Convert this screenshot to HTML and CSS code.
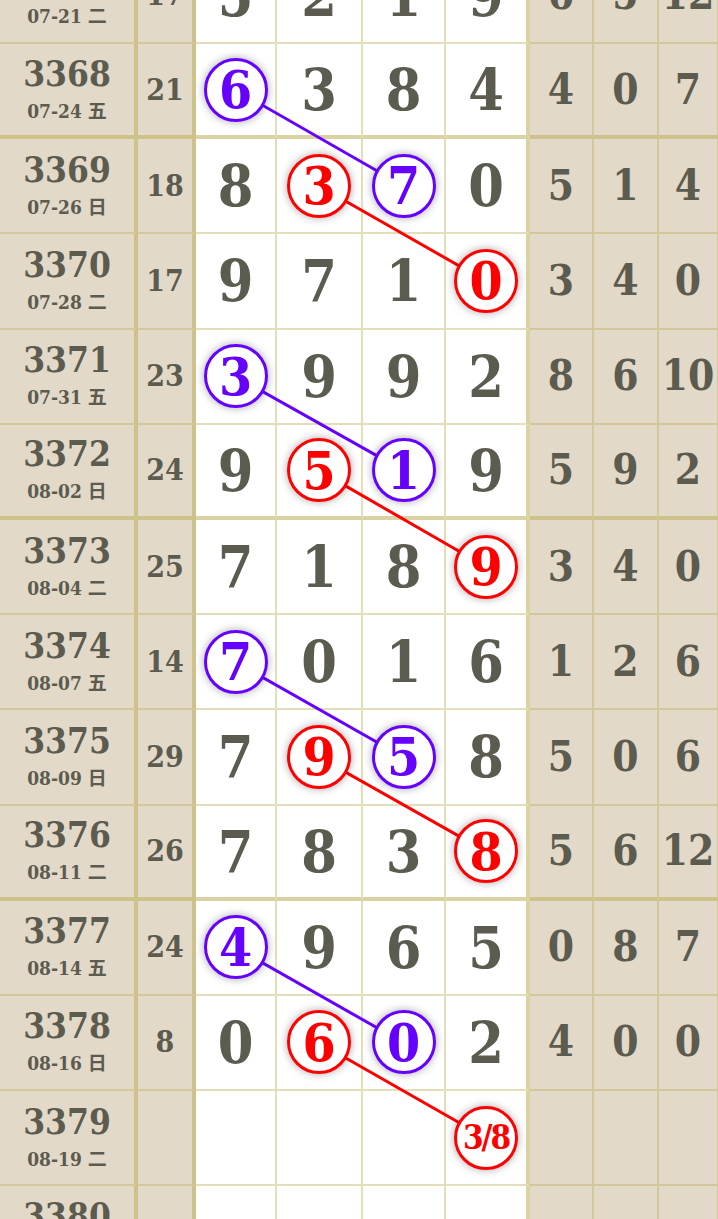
FILE: index.html
```html
<!DOCTYPE html>
<html>
<head>
<meta charset="utf-8">
<title>走势图</title>
<link rel="stylesheet" href="styles.css">
</head>
<body>

<div class="chart">

  <!-- connecting lines, drawn under the balls -->
  <svg class="links" width="719" height="1400">
    <g stroke="#6600ff" stroke-width="3">
      <line x1="235.5" y1="140.8" x2="403.5" y2="237.0"/>
      <line x1="235.5" y1="427.4" x2="403.5" y2="521.6"/>
      <line x1="235.5" y1="713.0" x2="403.5" y2="808.2"/>
      <line x1="235.5" y1="998.6" x2="403.5" y2="1093.8"/>
    </g>
    <g stroke="#ff0000" stroke-width="3">
      <line x1="319" y1="237.0" x2="486" y2="332.2"/>
      <line x1="319" y1="521.6" x2="486" y2="617.8"/>
      <line x1="319" y1="808.2" x2="486" y2="902.4"/>
      <line x1="319" y1="1093.8" x2="486" y2="1189.0"/>
    </g>
  </svg>

  <div class="row">
    <div class="issue"><span class="no">3367</span><span class="date">07-21 二</span></div>
    <div class="sum">17</div>
    <div class="num">5</div><div class="num">2</div><div class="num">1</div><div class="num n4">9</div>
    <div class="stat">6</div><div class="stat">5</div><div class="stat">12</div>
  </div>

  <div class="row sep">
    <div class="issue"><span class="no">3368</span><span class="date">07-24 五</span></div>
    <div class="sum">21</div>
    <div class="num"><span class="ball blue">6</span></div><div class="num">3</div><div class="num">8</div><div class="num n4">4</div>
    <div class="stat">4</div><div class="stat">0</div><div class="stat">7</div>
  </div>

  <div class="row">
    <div class="issue"><span class="no">3369</span><span class="date">07-26 日</span></div>
    <div class="sum">18</div>
    <div class="num">8</div><div class="num"><span class="ball red">3</span></div><div class="num"><span class="ball blue">7</span></div><div class="num n4">0</div>
    <div class="stat">5</div><div class="stat">1</div><div class="stat">4</div>
  </div>

  <div class="row">
    <div class="issue"><span class="no">3370</span><span class="date">07-28 二</span></div>
    <div class="sum">17</div>
    <div class="num">9</div><div class="num">7</div><div class="num">1</div><div class="num n4"><span class="ball red">0</span></div>
    <div class="stat">3</div><div class="stat">4</div><div class="stat">0</div>
  </div>

  <div class="row">
    <div class="issue"><span class="no">3371</span><span class="date">07-31 五</span></div>
    <div class="sum">23</div>
    <div class="num"><span class="ball blue">3</span></div><div class="num">9</div><div class="num">9</div><div class="num n4">2</div>
    <div class="stat">8</div><div class="stat">6</div><div class="stat">10</div>
  </div>

  <div class="row sep">
    <div class="issue"><span class="no">3372</span><span class="date">08-02 日</span></div>
    <div class="sum">24</div>
    <div class="num">9</div><div class="num"><span class="ball red">5</span></div><div class="num"><span class="ball blue">1</span></div><div class="num n4">9</div>
    <div class="stat">5</div><div class="stat">9</div><div class="stat">2</div>
  </div>

  <div class="row">
    <div class="issue"><span class="no">3373</span><span class="date">08-04 二</span></div>
    <div class="sum">25</div>
    <div class="num">7</div><div class="num">1</div><div class="num">8</div><div class="num n4"><span class="ball red">9</span></div>
    <div class="stat">3</div><div class="stat">4</div><div class="stat">0</div>
  </div>

  <div class="row">
    <div class="issue"><span class="no">3374</span><span class="date">08-07 五</span></div>
    <div class="sum">14</div>
    <div class="num"><span class="ball blue">7</span></div><div class="num">0</div><div class="num">1</div><div class="num n4">6</div>
    <div class="stat">1</div><div class="stat">2</div><div class="stat">6</div>
  </div>

  <div class="row">
    <div class="issue"><span class="no">3375</span><span class="date">08-09 日</span></div>
    <div class="sum">29</div>
    <div class="num">7</div><div class="num"><span class="ball red">9</span></div><div class="num"><span class="ball blue">5</span></div><div class="num n4">8</div>
    <div class="stat">5</div><div class="stat">0</div><div class="stat">6</div>
  </div>

  <div class="row sep">
    <div class="issue"><span class="no">3376</span><span class="date">08-11 二</span></div>
    <div class="sum">26</div>
    <div class="num">7</div><div class="num">8</div><div class="num">3</div><div class="num n4"><span class="ball red">8</span></div>
    <div class="stat">5</div><div class="stat">6</div><div class="stat">12</div>
  </div>

  <div class="row">
    <div class="issue"><span class="no">3377</span><span class="date">08-14 五</span></div>
    <div class="sum">24</div>
    <div class="num"><span class="ball blue">4</span></div><div class="num">9</div><div class="num">6</div><div class="num n4">5</div>
    <div class="stat">0</div><div class="stat">8</div><div class="stat">7</div>
  </div>

  <div class="row">
    <div class="issue"><span class="no">3378</span><span class="date">08-16 日</span></div>
    <div class="sum">8</div>
    <div class="num">0</div><div class="num"><span class="ball red">6</span></div><div class="num"><span class="ball blue">0</span></div><div class="num n4">2</div>
    <div class="stat">4</div><div class="stat">0</div><div class="stat">0</div>
  </div>

  <div class="row">
    <div class="issue"><span class="no">3379</span><span class="date">08-19 二</span></div>
    <div class="sum"></div>
    <div class="num"></div><div class="num"></div><div class="num"></div><div class="num n4"><span class="ball red guess">3/8</span></div>
    <div class="stat"></div><div class="stat"></div><div class="stat"></div>
  </div>

  <div class="row sep">
    <div class="issue"><span class="no">3380</span><span class="date">08-21 四</span></div>
    <div class="sum"></div>
    <div class="num"></div><div class="num"></div><div class="num"></div><div class="num n4"></div>
    <div class="stat"></div><div class="stat"></div><div class="stat"></div>
  </div>

</div>

</body>
</html>
```

FILE: styles.css
```css
body {
    margin: 0;
    background: #fff;
    overflow: hidden;
    font-family: "DejaVu Serif", "Liberation Serif", "Noto Sans CJK SC", serif;
    font-stretch: condensed;
    font-weight: bold;
    color: #5c5b4f;
}

.chart {
    position: relative;
    display: grid;
    grid-template-columns: 138px 58px 81px 86px 83px 84px 64px 65px 60px;
    grid-auto-rows: 95.2px;
    width: 719px;
    margin-top: -51.2px;
}

.row {
    display: contents;
}

.row > div {
    display: flex;
    align-items: center;
    justify-content: center;
    box-sizing: border-box;
    border-right: 2px solid rgba(190, 175, 90, 0.42);
    border-bottom: 2px solid rgba(190, 175, 90, 0.42);
    line-height: 1;
}

.row.sep > div {
    border-bottom: 4px solid rgba(190, 175, 90, 0.55);
}

.row > .issue,
.row > .sum,
.row > .n4 {
    border-right: 4px solid rgba(190, 175, 90, 0.55);
}

.issue, .sum, .stat {
    background: #e2d9c8;
}

.issue {
    flex-direction: column;
    padding-bottom: 2px;
}

.issue .no {
    font-size: 35px;
    line-height: 38px;
}

.issue .date {
    margin-top: 6px;
    font-size: 19px;
    line-height: 24px;
}

.sum {
    font-size: 30px;
}

.num {
    font-size: 57px;
    background: #fff;
}

.stat {
    font-size: 42px;
}

/* circled numbers */
.ball {
    position: relative;
    z-index: 2;
    display: flex;
    align-items: center;
    justify-content: center;
    width: 64px;
    height: 64px;
    box-sizing: border-box;
    border: 3px solid;
    border-radius: 50%;
    background: #fff;
    box-shadow: 0 0 8px rgba(0, 0, 0, 0.35);
    font-size: 53px;
}

.blue {
    color: #6600ff;
}

.red {
    color: #ff0000;
}

.ball.guess {
    font-size: 33px;
    letter-spacing: -2px;
}

.links {
    position: absolute;
    top: 0;
    left: 0;
    z-index: 1;
    pointer-events: none;
}
```
